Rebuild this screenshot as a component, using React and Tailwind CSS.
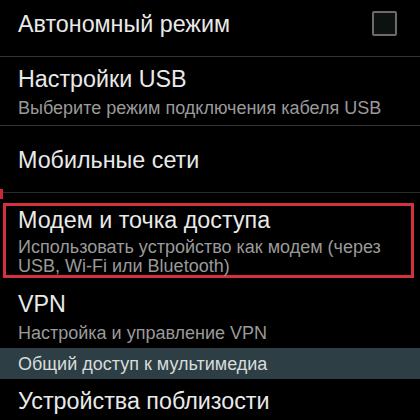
export default function App() {
  const font = { fontFamily: '"Liberation Sans", Arial, sans-serif' };
  return (
    <div className="w-[420px] h-[420px] overflow-hidden bg-black text-[#e9e9e9]" style={font}>
      <div className="h-[56px] flex items-start justify-between pl-[18px] pr-[23px] pt-[9px]">
        <div className="text-[23.3px] leading-[30px]">Автономный режим</div>
        <div className="w-[25px] h-[25px] mt-[2px] border-2 border-[#6b6b6b] bg-[#0b1210] rounded-[2px]" />
      </div>
      <div className="h-px bg-[#333]" />
      <div className="h-[68px] pl-[18px] pt-[8px]">
        <div className="text-[23.3px] leading-[28px]">Настройки USB</div>
        <div className="text-[18px] leading-[22px] text-[#9a9a9a] mt-[4px]">Выберите режим подключения кабеля USB</div>
      </div>
      <div className="h-px bg-[#333]" />
      <div className="h-[66px] pl-[18px] pt-[19px]">
        <div className="text-[23.3px] leading-[30px]">Мобильные сети</div>
      </div>
      <div className="relative h-px bg-[#2a2a2a]">
        <div className="absolute left-0 top-[-3px] w-[3px] h-[10px] bg-[#c8283a]" />
      </div>
      <div className="h-[10px]" />
      <div className="mx-[3px] w-[411px] h-[75px] border-[3px] border-[#d6303f] pl-[12px]">
        <div className="text-[23.3px] leading-[28px]">Модем и точка доступа</div>
        <div className="text-[18px] leading-[19px] text-[#9a9a9a] mt-[4px]">
          Использовать устройство как модем (через
          <br />
          USB, Wi-Fi или Bluetooth)
        </div>
      </div>
      <div className="h-[70px] pl-[18px] pt-[12px]">
        <div className="text-[23.3px] leading-[28px]">VPN</div>
        <div className="text-[18px] leading-[22px] text-[#9a9a9a] mt-[4px]">Настройка и управление VPN</div>
      </div>
      <div className="h-[31px] bg-[#2d3f44] pl-[18px] flex items-center">
        <div className="text-[18px] leading-[22px] text-[#d8dcdc]">Общий доступ к мультимедиа</div>
      </div>
      <div className="pl-[18px] pt-[7px]">
        <div className="text-[23.3px] leading-[30px]">Устройства поблизости</div>
      </div>
    </div>
  );
}
